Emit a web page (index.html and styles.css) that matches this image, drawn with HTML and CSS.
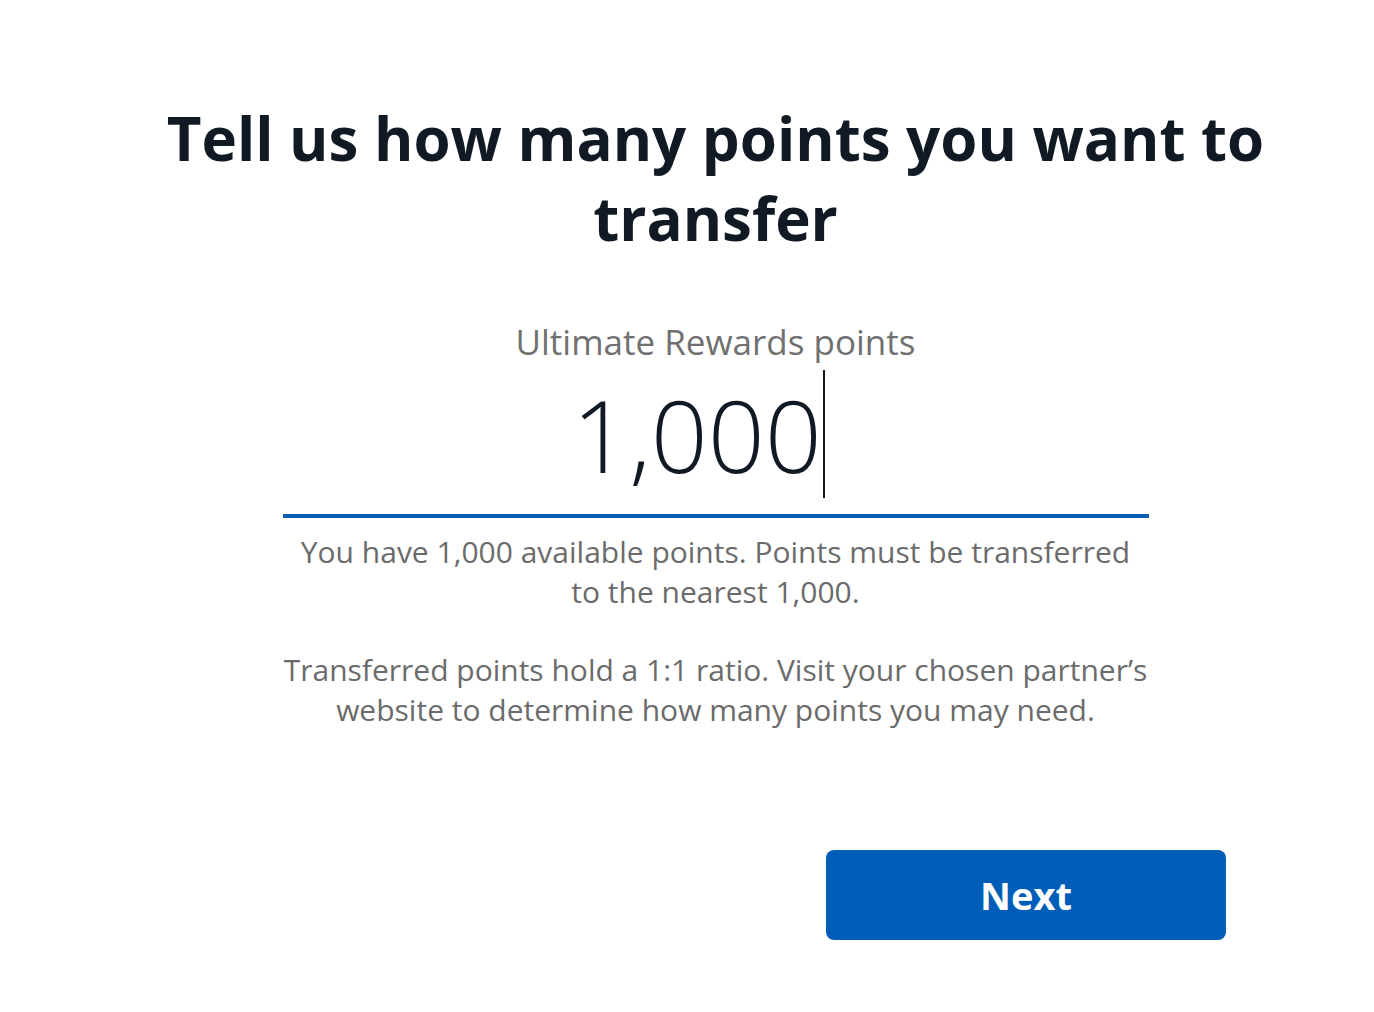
FILE: index.html
```html
<!DOCTYPE html>
<html lang="en">
<head>
  <meta charset="UTF-8">
  <meta name="viewport" content="width=device-width, initial-scale=1.0">
  <title>Transfer points</title>
  <link rel="stylesheet" href="styles.css">
</head>
<body>
  <div class="page">
    <h1 class="title">Tell us how many points you want to transfer</h1>

    <div class="amount">
      <label class="amount-label" for="points">Ultimate Rewards points</label>
      <div class="amount-field">
        <span class="amount-value" id="points">1,000</span><span class="caret"></span>
      </div>
      <p class="note">You have 1,000 available points. Points must be transferred<br>to the nearest 1,000.</p>
      <p class="note">Transferred points hold a 1:1 ratio. Visit your chosen partner’s website to determine how many points you may need.</p>
    </div>

    <div class="actions">
      <button class="next">Next</button>
    </div>
  </div>
</body>
</html>
```

FILE: styles.css
```css
body{
  margin: 0;
  background: #fff;
  font-family: "Open Sans", "Noto Sans", sans-serif;
}
.page{
  padding: 98px 0 0 57px;
  display: flex;
  flex-direction: column;
  align-items: center;
}
.title{
  margin: 0;
  width: 1140px;
  text-align: center;
  font-size: 60px;
  line-height: 80px;
  font-weight: 700;
  color: #111a24;
}
.amount{
  width: 866px;
  margin-top: 62px;
  display: flex;
  flex-direction: column;
  align-items: center;
}
.amount-label{
  font-size: 35px;
  line-height: 44px;
  color: #707070;
}
.amount-field{
  align-self: stretch;
  box-sizing: border-box;
  height: 154px;
  padding: 0 34px 10px 0;
  display: flex;
  justify-content: center;
  align-items: center;
  border-bottom: 4px solid #0b5fb0;
}
.amount-value{
  font-size: 100px;
  font-weight: 300;
  color: #111a24;
  line-height: 1;
}
.caret{
  width: 2px;
  height: 128px;
  margin-left: 1px;
  background: #111a24;
}
.note{
  margin: 14px 0 0;
  width: 866px;
  text-align: center;
  font-size: 30px;
  line-height: 40px;
  color: #6b6b6b;
}
.note + .note{
  margin-top: 38px;
}
.actions{
  width: 1021px;
  margin-top: 120px;
  display: flex;
  justify-content: flex-end;
}
.next{
  width: 400px;
  height: 90px;
  border: none;
  border-radius: 8px;
  background: #005eb8;
  color: #fff;
  font-family: inherit;
  font-size: 38px;
  font-weight: 700;
}
```
